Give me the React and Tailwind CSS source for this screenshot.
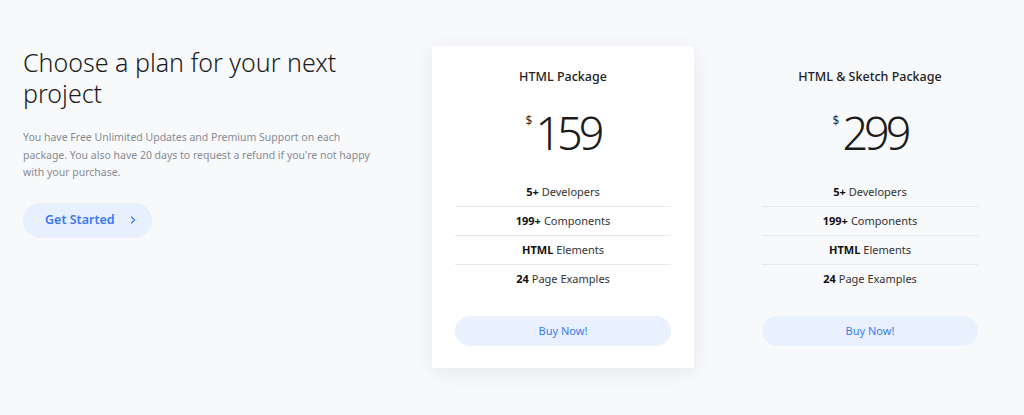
import { ChevronRight } from 'lucide-react';

const plans = [
  { name: 'HTML Package', price: '159', card: true },
  { name: 'HTML & Sketch Package', price: '299', card: false },
];

const features = [
  ['5+', 'Developers'],
  ['199+', 'Components'],
  ['HTML', 'Elements'],
  ['24', 'Page Examples'],
];

const PlanCard = ({ plan }) => (
  <div
    className={`w-[262px] h-[322px] px-[23px] pt-[21px] flex flex-col items-center rounded-[3px] ${
      plan.card ? 'bg-white shadow-[0_4px_20px_rgba(30,40,60,0.08)]' : ''
    }`}
  >
    <h3 className="text-[12.5px] font-medium text-[#222] mt-[1px]">{plan.name}</h3>
    <div className="flex items-start mt-[23px] text-[#1b1b1b]">
      <span className="text-[12px] mt-[2px] mr-[3px] text-[#333]">$</span>
      <span className="text-[45px] leading-[46px] font-light tracking-[-4px]">{plan.price}</span>
    </div>
    <ul className="w-full mt-[22px]">
      {features.map(([b, rest], i) => (
        <li
          key={i}
          className={`h-[29px] flex items-center justify-center text-[11px] text-[#333] ${
            i < features.length - 1 ? 'border-b border-[#e6e8ec]' : ''
          }`}
        >
          <span className="font-bold text-[#111] mr-[3px]">{b}</span>
          {rest}
        </li>
      ))}
    </ul>
    <button className="w-full h-[30px] mt-[22px] rounded-full bg-[#eaf1fe] text-[#3b7bf2] text-[11px]">
      Buy Now!
    </button>
  </div>
);

export default function App() {
  return (
    <div
      className="w-[1024px] h-[415px] bg-[#f8f9fb] flex pt-[46px]"
      style={{ fontFamily: '"Noto Sans", "Open Sans", sans-serif' }}
    >
      <div className="w-[432px] pl-[23px]">
        <h1 className="text-[25px] leading-[31px] font-light text-[#1c1c1c] w-[340px] mt-[1px]">
          Choose a plan for your next project
        </h1>
        <p className="mt-[20px] text-[10.5px] leading-[17.5px] text-[#868b94] w-[360px]">
          You have Free Unlimited Updates and Premium Support on each package. You also have 20 days to
          request a refund if you're not happy with your purchase.
        </p>
        <button className="mt-[21px] w-[129px] h-[35px] rounded-full bg-[#e8f0fe] text-[#3a78f2] text-[12.5px] font-semibold flex items-center pl-[22px]">
          Get Started
          <ChevronRight className="ml-[12px] w-[12px] h-[12px]" strokeWidth={2.5} />
        </button>
      </div>
      <div className="flex gap-[45px]">
        {plans.map((p) => (
          <PlanCard key={p.name} plan={p} />
        ))}
      </div>
    </div>
  );
}
